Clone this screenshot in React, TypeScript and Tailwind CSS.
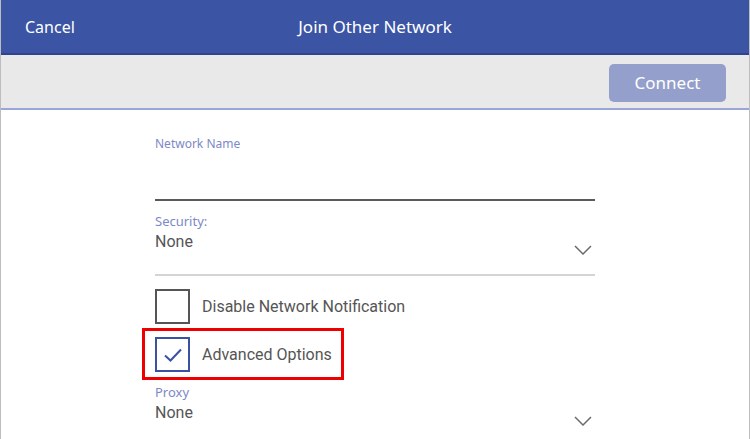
import { useState } from 'react';

const Chevron: React.FC = () => (
  <svg width="18" height="10" viewBox="0 0 18 10" fill="none" className="shrink-0">
    <path d="M1 1 L9 9 L17 1" stroke="#6b6b6b" strokeWidth="1.5" />
  </svg>
);

const Checkbox: React.FC<{ checked: boolean; label: string }> = ({ checked, label }) => (
  <div className="flex items-center gap-3">
    <div
      className={
        checked
          ? 'flex h-[35px] w-[35px] items-center justify-center border-2 border-[#3b52a3]'
          : 'flex h-[35px] w-[35px] items-center justify-center border-2 border-[#555555]'
      }
    >
      {checked && (
        <svg width="20" height="16" viewBox="0 0 20 16" fill="none">
          <path d="M2 8.5 L7.5 13.5 L18 2.5" stroke="#3b52a3" strokeWidth="2" />
        </svg>
      )}
    </div>
    <span className="text-[16px] text-[#555555]">{label}</span>
  </div>
);

const SelectField: React.FC<{ label: string; value: string; underline?: boolean }> = ({
  label,
  value,
  underline = true,
}) => (
  <div className={underline ? 'border-b-2 border-[#d4d4d4]' : ''}>
    <div
      className="text-[13px] leading-[16px] text-[#7c89c6]"
      style={{ fontFamily: '"Noto Sans", sans-serif' }}
    >
      {label}
    </div>
    <div className="flex items-end justify-between pr-[3px] pt-[1px]">
      <span className="text-[16px] leading-[24px] text-[#555555]">{value}</span>
      <div className="translate-y-[1px]">
        <Chevron />
      </div>
    </div>
    {underline && <div className="h-[20px]" />}
  </div>
);

export default function App() {
  const [advanced] = useState(true);

  return (
    <div
      className="relative h-[439px] w-[750px] overflow-hidden border-x border-[#bdbdbd] bg-white"
      style={{ fontFamily: 'Roboto, "Noto Sans", sans-serif' }}
    >
      <header
        className="flex h-[55px] items-center border-b-2 border-[#2e4391] bg-[#3c54a4] px-[24px] text-white"
        style={{ fontFamily: '"Noto Sans", sans-serif' }}
      >
        <span className="w-[120px] text-[16px]">Cancel</span>
        <span className="flex-1 text-center text-[17px]">Join Other Network</span>
        <span className="w-[120px]" />
      </header>
      <div className="flex h-[55px] items-center justify-end border-b-2 border-[#9aa6d9] bg-[#e9e9e9] pr-[23px]">
        <button
          className="mt-[2px] h-[38px] w-[117px] rounded-[5px] bg-[#959fcb] text-[17px] text-white"
          style={{ fontFamily: '"Noto Sans", sans-serif' }}
        >
          Connect
        </button>
      </div>
      <main className="ml-[154px] w-[440px] pt-[26px]">
        <div
          className="text-[12px] leading-[16px] text-[#7c89c6]"
          style={{ fontFamily: '"Noto Sans", sans-serif' }}
        >
          Network Name
        </div>
        <div className="h-[49px] border-b-2 border-[#5a5a5a]" />
        <div className="pt-[12px]">
          <SelectField label="Security:" value="None" />
        </div>
        <div className="flex flex-col gap-[13px] pt-[13px]">
          <Checkbox checked={false} label="Disable Network Notification" />
          <Checkbox checked={advanced} label="Advanced Options" />
        </div>
        <div className="pt-[12px]">
          <SelectField label="Proxy" value="None" underline={false} />
        </div>
      </main>
      <div className="absolute left-[141px] top-[328px] h-[52px] w-[202px] border-[3px] border-[#ee0000]" />
    </div>
  );
}
